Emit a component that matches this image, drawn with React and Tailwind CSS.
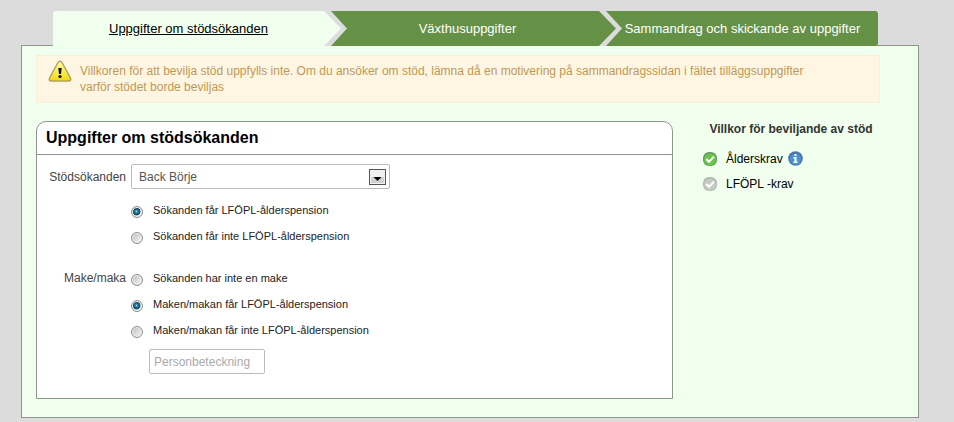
import React, { useState } from "react";

const steps = [
  "Uppgifter om stödsökanden",
  "Växthusuppgifter",
  "Sammandrag och skickande av uppgifter",
];

const applicantOptions = [
  { value: "pension", label: "Sökanden får LFÖPL-ålderspension" },
  { value: "no-pension", label: "Sökanden får inte LFÖPL-ålderspension" },
];

const spouseOptions = [
  { value: "none", label: "Sökanden har inte en make" },
  { value: "pension", label: "Maken/makan får LFÖPL-ålderspension" },
  { value: "no-pension", label: "Maken/makan får inte LFÖPL-ålderspension" },
];

// Arrow between two steps, fill is the colour of the step on its left
const StepArrow = ({ fill }) => (
  <svg
    className="absolute top-0 -left-1 h-full w-6"
    viewBox="0 0 24 35"
    preserveAspectRatio="none"
    aria-hidden="true"
  >
    <polygon points="0,0 7,0 23,17.5 7,35 0,35" fill="#dcdcdc" />
    <polygon points="0,0 17,17.5 0,35" fill={fill} />
  </svg>
);

const Steps = ({ current, onSelect }) => (
  <nav className="relative z-10 -mb-px ml-8 mr-[41px] grid grid-cols-3 overflow-hidden rounded-t-[3px] rounded-br-[3px]">
    {steps.map((step, i) => (
      <div key={step} className="relative">
        <button
          type="button"
          onClick={() => onSelect(i)}
          className={
            i === current
              ? "block h-[35px] w-full bg-[#f0ffee] pr-1 text-[13px] text-black underline"
              : "block h-[35px] w-full bg-[#659147] pl-1 text-[13px] whitespace-nowrap text-white"
          }
        >
          {step}
        </button>
        {i > 0 && <StepArrow fill={i - 1 === current ? "#f0ffee" : "#659147"} />}
      </div>
    ))}
  </nav>
);

const WarningIcon = () => (
  <svg className="h-[22px] w-6 shrink-0" viewBox="0 0 24 22" aria-hidden="true">
    <defs>
      <linearGradient id="warn" x1="0" y1="0" x2="0" y2="1">
        <stop offset="0" stopColor="#fffbb0" />
        <stop offset="0.55" stopColor="#f6ec55" />
        <stop offset="1" stopColor="#f0d800" />
      </linearGradient>
    </defs>
    <path
      d="M12 1.2c.9 0 1.5.4 2 1.3l8.4 15.500c.9 1.700.1 3-1.600 3H3.200c-1.700 0-2.500-1.300-1.600-3L10 2.500c.5-.9 1.100-1.300 2-1.300z"
      fill="url(#warn)"
      stroke="#b5a25a"
      strokeWidth="1.5"
    />
    <path d="M10.300 8h3.400l-.7 6h-2z" fill="#111" />
    <circle cx="12" cy="16.500" r="1.600" fill="#111" />
  </svg>
);

const CheckIcon = ({ active }) => (
  <svg className="h-[14px] w-[14px] shrink-0" viewBox="0 0 14 14" aria-hidden="true">
    <rect width="14" height="14" rx="6" fill={active ? "#6a9a68" : "#b4b8b2"} />
    <circle cx="7" cy="7.500" r="6" fill={active ? "#68c44a" : "#c6c9c4"} />
    <path
      d="M3.200 7l2.800 2.800L11 4.600"
      fill="none"
      stroke="#fff"
      strokeWidth="2"
    />
  </svg>
);

const InfoIcon = () => (
  <svg className="h-[15px] w-[15px]" viewBox="0 0 15 15" aria-hidden="true">
    <circle cx="7.500" cy="7.500" r="7.300" fill="#4a76a8" />
    <circle cx="7.500" cy="8.300" r="5.600" fill="#4b93d4" />
    <rect x="6.500" y="3" width="2" height="2" fill="#fff" />
    <path d="M5.500 6h3v4.500h1V12h-4v-1.500h1v-3h-1z" fill="#fff" />
  </svg>
);

const RadioGroup = ({ name, label, options, value, onChange }) => (
  <div role="radiogroup" aria-label={label} className="flex flex-col">
    {options.map((option) => (
      <label
        key={option.value}
        className="flex h-[26px] items-center gap-[10px] text-[11px] text-[#222]"
      >
        <input
          type="radio"
          name={name}
          checked={value === option.value}
          onChange={() => onChange(option.value)}
          className="mt-1 h-3 w-3 appearance-none rounded-full border border-[#8e8f8f] bg-[linear-gradient(135deg,#b9bcbe,#fafafa)] shadow-[inset_0_0_0_1px_#f0f0f0] checked:border-[#8e8f8f] checked:bg-[radial-gradient(circle_at_45%_45%,#9fe4f8_0,#2f87a8_15%,#12405a_45%,#dfe8ec_55%)]"
        />
        <span>{option.label}</span>
      </label>
    ))}
  </div>
);

const ApplicantForm = () => {
  const [applicant, setApplicant] = useState("pension");
  const [spouse, setSpouse] = useState("pension");

  return (
    <section className="min-w-0 flex-1 rounded-t-[10px] border border-[#8e968c] bg-white pb-6">
      <h2 className="border-b border-[#8e968c] pl-[9px] text-[16px] leading-8 font-bold text-black">
        Uppgifter om stödsökanden
      </h2>

      <div className="mt-[9px] grid grid-cols-[89px_1fr] gap-x-[5px] text-[12px] text-[#444]">
        <label htmlFor="applicant" className="self-center text-right">
          Stödsökanden
        </label>
        <div className="relative w-[259px]">
          <select
            id="applicant"
            className="h-[25px] w-full appearance-none rounded-[2px] border border-[#bbb] bg-white pl-[7px] text-[12px] text-[#555]"
          >
            <option>Back Börje</option>
          </select>
          <svg
            className="pointer-events-none absolute top-[5px] right-1 h-4 w-[17px]"
            viewBox="0 0 17 16"
            aria-hidden="true"
          >
            <rect x="0.500" y="0.500" width="16" height="15" fill="#f0f0f0" stroke="#555" />
            <rect x="2" y="8" width="13" height="6" fill="#d2d2d2" />
            <path d="M4.500 8h8l-4 4z" fill="#000" />
          </svg>
        </div>

        <div className="col-start-2 mt-2">
          <RadioGroup
            name="applicant-pension"
            label="Stödsökanden"
            options={applicantOptions}
            value={applicant}
            onChange={setApplicant}
          />
        </div>

        <span className="mt-4 text-right leading-[26px]">Make/maka</span>
        <div className="mt-4">
          <RadioGroup
            name="spouse-pension"
            label="Make/maka"
            options={spouseOptions}
            value={spouse}
            onChange={setSpouse}
          />
          <input
            type="text"
            aria-label="Personbeteckning"
            placeholder="Personbeteckning"
            className="mt-[6px] ml-[18px] block h-[25px] w-[116px] rounded-[2px] border border-[#bbb] px-1 text-[12px] placeholder:text-[#aaa]"
          />
        </div>
      </div>
    </section>
  );
};

const Conditions = () => (
  <aside className="w-[176px] shrink-0 text-[12px] text-black">
    <h3 className="text-center leading-4 font-bold text-[#333]">
      Villkor för beviljande av stöd
    </h3>
    <ul className="mt-[9px]">
      <li className="flex h-[25px] items-center gap-[9px]">
        <CheckIcon active />
        <span>Ålderskrav</span>
        <button type="button" aria-label="Info" className="-ml-1">
          <InfoIcon />
        </button>
      </li>
      <li className="flex h-[25px] items-center gap-[9px]">
        <CheckIcon />
        <span>LFÖPL -krav</span>
      </li>
    </ul>
  </aside>
);

const App = () => {
  const [step, setStep] = useState(0);

  return (
    <div className="min-h-screen bg-[#dcdcdc] pt-[11px] pr-[35px] pb-1 pl-[21px] font-['Liberation_Sans',Arial,sans-serif]">
      <Steps current={step} onSelect={setStep} />

      <main className="border border-[#8e968c] bg-[#f0ffee] pt-[9px] pb-[18px] pl-[14px]">
        <div
          role="alert"
          className="mr-[38px] flex gap-2 border border-[#fbeed5] bg-[#fef6e3] pt-1 pr-12 pb-[7px] pl-[11px] text-[12px] leading-4 text-[#c09853]"
        >
          <WarningIcon />
          <p className="pt-[3px]">
            Villkoren för att bevilja stöd uppfylls inte. Om du ansöker om stöd,
            lämna då en motivering på sammandragssidan i fältet
            tilläggsuppgifter varför stödet borde beviljas
          </p>
        </div>

        <div className="mt-[18px] flex gap-[30px] pr-[39px]">
          <ApplicantForm />
          <Conditions />
        </div>
      </main>
    </div>
  );
};

export default App;
